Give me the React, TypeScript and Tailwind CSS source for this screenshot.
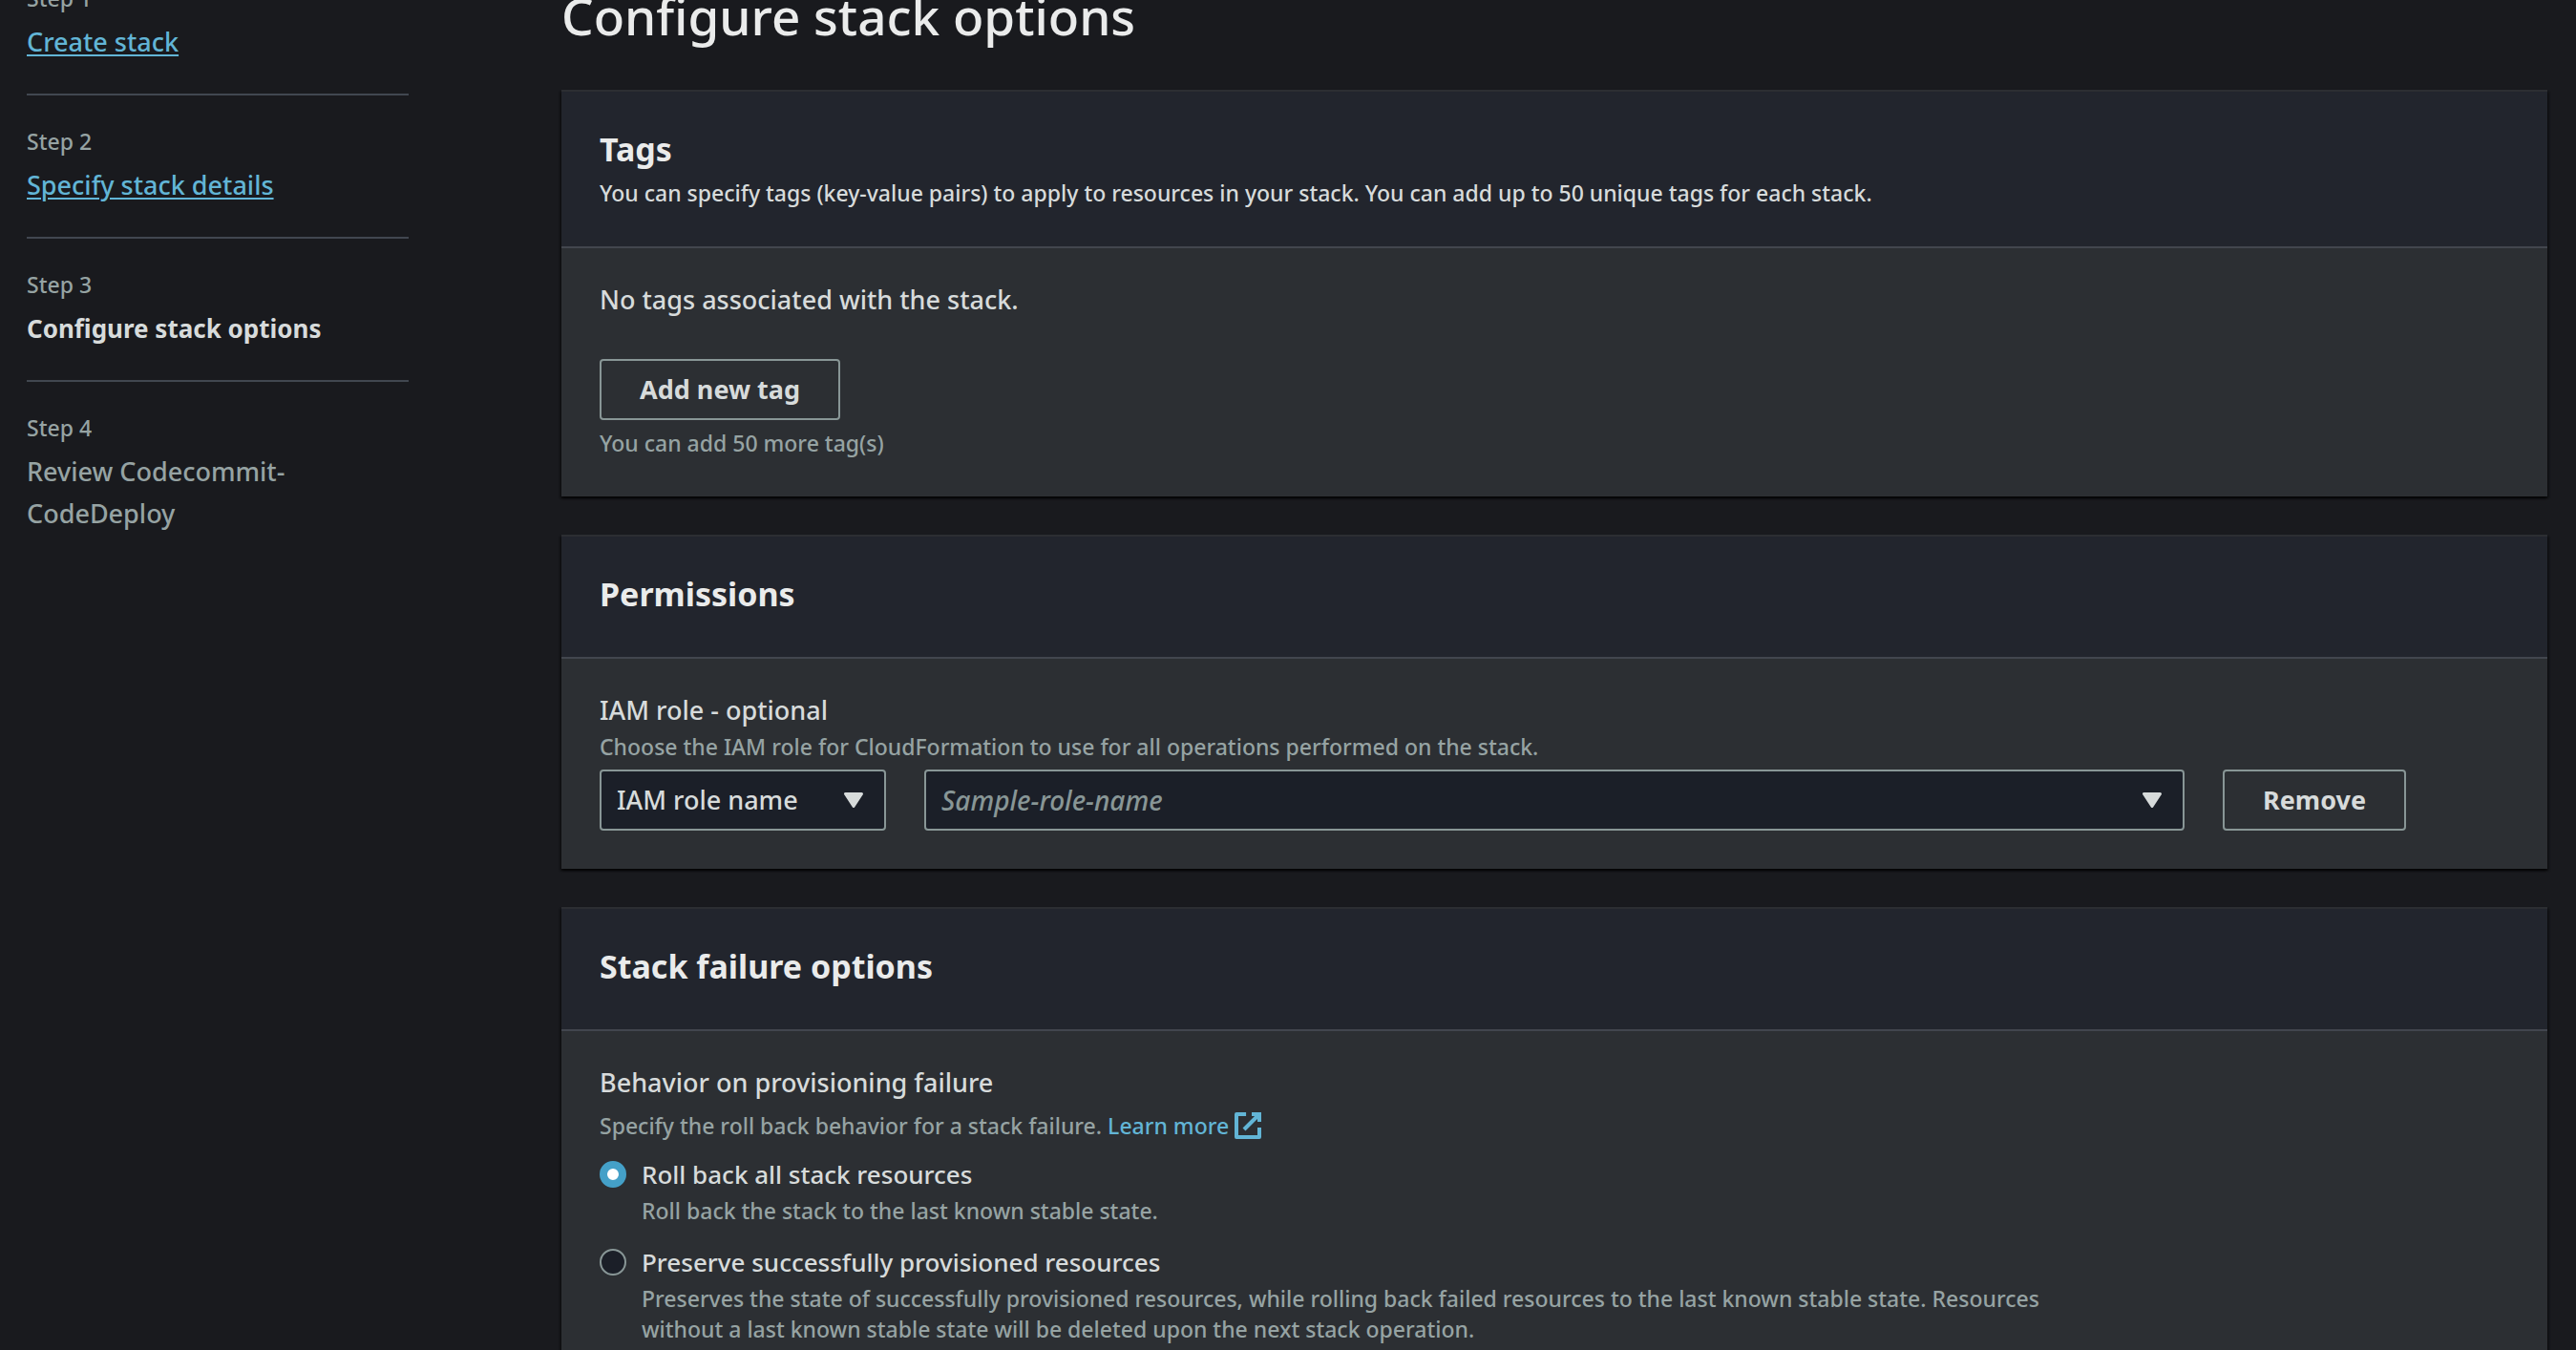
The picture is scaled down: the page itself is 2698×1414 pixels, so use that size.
import React, { useState } from "react";

type Step = { label: string; title: string; state: "done" | "current" | "upcoming" };

const steps: Step[] = [
  { label: "Step 1", title: "Create stack", state: "done" },
  { label: "Step 2", title: "Specify stack details", state: "done" },
  { label: "Step 3", title: "Configure stack options", state: "current" },
  { label: "Step 4", title: "Review Codecommit-CodeDeploy", state: "upcoming" },
];

const failureOptions = [
  {
    id: "rollback",
    title: "Roll back all stack resources",
    description: "Roll back the stack to the last known stable state.",
  },
  {
    id: "preserve",
    title: "Preserve successfully provisioned resources",
    description:
      "Preserves the state of successfully provisioned resources, while rolling back failed resources to the last known stable state. Resources without a last known stable state will be deleted upon the next stack operation.",
  },
];

function StepTitle({ step }: { step: Step }) {
  if (step.state === "done") {
    return (
      <a href="#" className="text-[27px] leading-[44px] text-[#62b5d6] underline decoration-2 underline-offset-[3px]">
        {step.title}
      </a>
    );
  }
  if (step.state === "current") {
    return <span className="text-[26px] leading-[44px] font-bold text-[#d7dbdb]">{step.title}</span>;
  }
  return <span className="text-[27px] leading-[44px] text-[#96a3a3]">{step.title}</span>;
}

function StepNav() {
  return (
    <nav aria-label="Steps" className="w-[400px] shrink-0">
      <ol>
        {steps.map((step) => (
          <li
            key={step.label}
            aria-current={step.state === "current" ? "step" : undefined}
            className="border-b-2 border-[#414750] pt-[30px] pb-8 last:border-b-0"
          >
            <p className="text-[23px] leading-[36px] text-[#96a3a3]">{step.label}</p>
            <div className="mt-[6px] flex max-w-[320px]">
              <StepTitle step={step} />
            </div>
          </li>
        ))}
      </ol>
    </nav>
  );
}

function Card({ title, description, children }: { title: string; description?: string; children: React.ReactNode }) {
  return (
    <section className="border-t-2 border-[#2c2e32] bg-[#2c2f33] shadow-[0_2px_2px_rgba(0,0,0,0.6),2px_2px_2px_rgba(0,0,0,0.3),-2px_2px_2px_rgba(0,0,0,0.3)]">
      <header className="border-b-2 border-[#42464e] bg-[#22252d] px-10 py-[38px]">
        <h2 className="mb-[6px] text-[34px] leading-[44px] font-bold text-[#eaebeb]">{title}</h2>
        {description && <p className="text-[23px] leading-[36px] text-[#d7dbdb]">{description}</p>}
      </header>
      <div className="px-10 pt-8 pb-10">{children}</div>
    </section>
  );
}

function Button({ children }: { children: React.ReactNode }) {
  return (
    <button
      type="button"
      className="h-16 rounded-[4px] border-2 border-[#889696] px-10 text-[27px] leading-[44px] font-bold text-[#d7dbdb]"
    >
      {children}
    </button>
  );
}

function Select({
  label,
  option,
  placeholder = false,
  className,
}: {
  label: string;
  option: string;
  placeholder?: boolean;
  className: string;
}) {
  return (
    <div className={"relative " + className}>
      <select
        aria-label={label}
        className={
          "h-16 w-full appearance-none rounded-[4px] border-2 border-[#889696] bg-[#1b1f28] pr-14 pl-4 leading-[44px] " +
          (placeholder ? "text-[28px] text-[#889696] italic" : "text-[27px] text-[#d7dbdb]")
        }
      >
        <option>{option}</option>
      </select>
      <svg
        aria-hidden="true"
        viewBox="0 0 20 16"
        className="pointer-events-none absolute top-6 right-6 h-4 w-5 fill-[#d7dbdb] stroke-[#d7dbdb]"
      >
        <path d="M1.5 1.5h17L10 14.5z" strokeWidth="3" strokeLinejoin="round" />
      </svg>
    </div>
  );
}

function ExternalIcon() {
  return (
    <svg aria-hidden="true" viewBox="0 0 16 16" className="size-8 fill-none stroke-[#62b5d6]" strokeWidth="2">
      <path d="M10 2h4v4" />
      <path d="M6 10l8-8" />
      <path d="M14 9.05V14H2V2h5.04" strokeLinejoin="round" />
    </svg>
  );
}

export default function App() {
  const [selected, setSelected] = useState("rollback");

  return (
    <div className="h-screen overflow-hidden bg-[#191a1e] font-['Noto_Sans',sans-serif] font-medium">
      <div className="-mt-[50px] flex gap-40 pr-[30px] pl-7">
        <StepNav />
        <main className="min-w-0 flex-1 pt-[31px]">
          <h1 className="mb-[41px] text-[53px] leading-[72px] text-[#eaebeb]">Configure stack options</h1>

          <div className="flex flex-col gap-10">
            <Card
              title="Tags"
              description="You can specify tags (key-value pairs) to apply to resources in your stack. You can add up to 50 unique tags for each stack."
            >
              <p className="mb-10 text-[27px] leading-[44px] text-[#d7dbdb]">No tags associated with the stack.</p>
              <Button>Add new tag</Button>
              <p className="mt-2 text-[23px] leading-8 text-[#96a3a3]">You can add 50 more tag(s)</p>
            </Card>

            <Card title="Permissions">
              <h3 className="text-[27px] leading-[44px] text-[#d7dbdb]">IAM role - optional</h3>
              <p className="mb-2 text-[23px] leading-8 text-[#96a3a3]">
                Choose the IAM role for CloudFormation to use for all operations performed on the stack.
              </p>
              <div className="grid grid-cols-12 gap-10">
                <Select label="IAM role identifier type" option="IAM role name" className="col-span-2" />
                <Select label="IAM role" option="Sample-role-name" placeholder className="col-span-8" />
                <div className="col-span-2">
                  <Button>Remove</Button>
                </div>
              </div>
            </Card>

            <Card title="Stack failure options">
              <fieldset>
                <legend className="text-[27px] leading-[44px] text-[#d7dbdb]">Behavior on provisioning failure</legend>
                <p className="mb-[6px] flex items-center gap-[6px] text-[23px] leading-[46px] text-[#96a3a3]">
                  Specify the roll back behavior for a stack failure.
                  <a href="#" className="flex items-center gap-1 text-[#62b5d6]">
                    Learn more
                    <ExternalIcon />
                  </a>
                </p>
                <div className="flex flex-col gap-4">
                  {failureOptions.map((option) => (
                    <div key={option.id} className="flex gap-4">
                      <input
                        type="radio"
                        id={option.id}
                        name="failure-behavior"
                        checked={selected === option.id}
                        onChange={() => setSelected(option.id)}
                        className="mt-2 size-7 shrink-0 appearance-none rounded-full border-2 border-[#889696] bg-[#1b1f28] checked:border-8 checked:border-[#44a0c8] checked:bg-white"
                      />
                      <div className="max-w-[1500px]">
                        <label htmlFor={option.id} className="block text-[26px] leading-[44px] text-[#d7dbdb]">
                          {option.title}
                        </label>
                        <p className="text-[23px] leading-8 text-[#96a3a3]">{option.description}</p>
                      </div>
                    </div>
                  ))}
                </div>
              </fieldset>
            </Card>
          </div>
        </main>
      </div>
    </div>
  );
}
